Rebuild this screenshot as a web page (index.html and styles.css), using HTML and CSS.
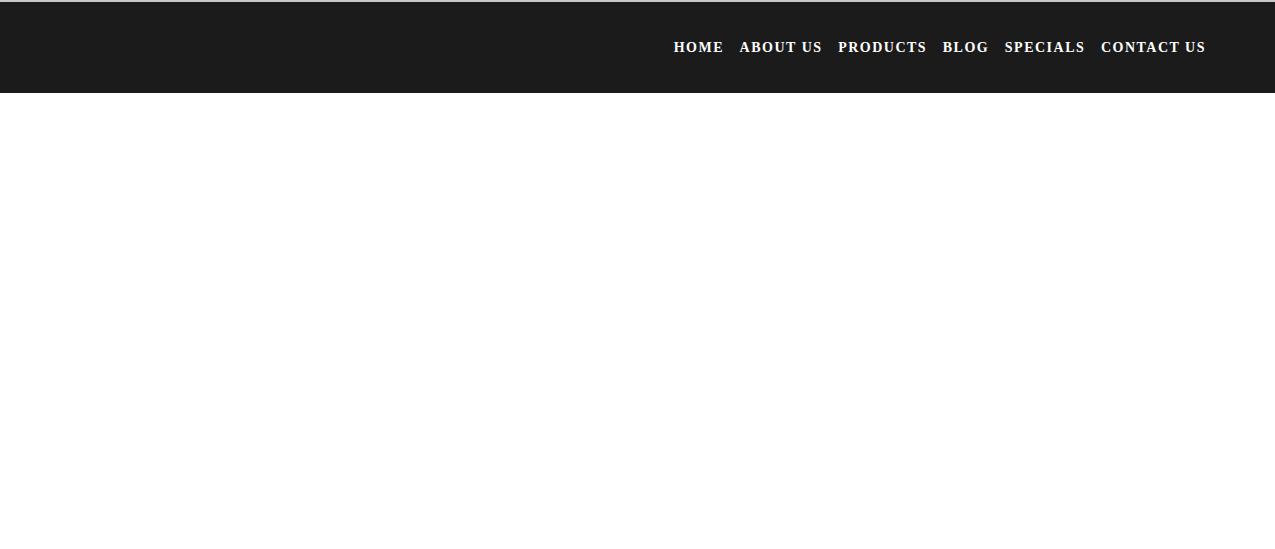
FILE: index.html
```html
<!DOCTYPE html>
<html>
<head>
<meta charset="utf-8">
<link rel="stylesheet" href="styles.css">
</head>
<body>
<header class="site-header">
  <nav class="main-nav">
    <a href="#">HOME</a>
    <a href="#">ABOUT US</a>
    <a href="#">PRODUCTS</a>
    <a href="#">BLOG</a>
    <a href="#">SPECIALS</a>
    <a href="#">CONTACT US</a>
  </nav>
</header>
<main class="content"></main>
</body>
</html>
```
FILE: styles.css
```css
html, body {
  margin: 0;
  padding: 0;
  background: #ffffff;
}
.site-header {
  border-top: 2px solid #c9c9c9;
  background: #1b1b1b;
  height: 91px;
  display: flex;
  align-items: center;
  justify-content: flex-end;
  padding-right: 69px;
}
.main-nav {
  display: flex;
  gap: 15.6px;
}
.main-nav a {
  font-family: "Liberation Serif", "Times New Roman", serif;
  font-weight: bold;
  font-size: 14px;
  letter-spacing: 1.5px;
  color: #ffffff;
  text-decoration: none;
}
```
